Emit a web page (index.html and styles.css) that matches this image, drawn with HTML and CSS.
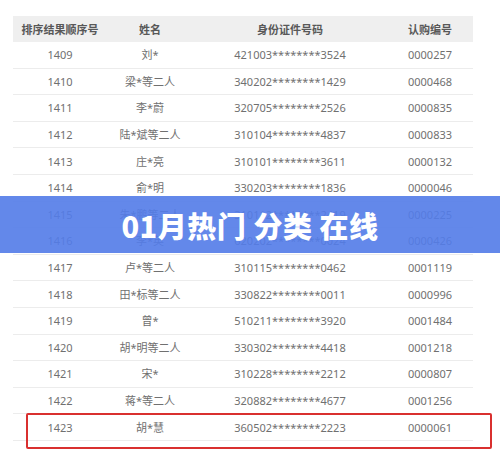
FILE: index.html
```html
<!DOCTYPE html>
<html lang="zh">
<head>
<meta charset="utf-8">
<link rel="stylesheet" href="styles.css">
</head>
<body>
<div class="page">
  <table class="list">
    <colgroup><col class="c1"><col class="c2"><col class="c3"><col class="c4"></colgroup>
    <thead>
      <tr><th>排序结果顺序号</th><th>姓名</th><th>身份证件号码</th><th>认购编号</th></tr>
    </thead>
    <tbody>
      <tr><td>1409</td><td>刘*</td><td>421003********3524</td><td>0000257</td></tr>
      <tr><td>1410</td><td>梁*等二人</td><td>340202********1429</td><td>0000468</td></tr>
      <tr><td>1411</td><td>李*蔚</td><td>320705********2526</td><td>0000835</td></tr>
      <tr><td>1412</td><td>陆*斌等二人</td><td>310104********4837</td><td>0000833</td></tr>
      <tr><td>1413</td><td>庄*亮</td><td>310101********3611</td><td>0000132</td></tr>
      <tr><td>1414</td><td>俞*明</td><td>330203********1836</td><td>0000046</td></tr>
      <tr><td>1415</td><td>朱*鹏等二人</td><td>310112********2419</td><td>0000225</td></tr>
      <tr><td>1416</td><td>李*英</td><td>620202********0024</td><td>0000426</td></tr>
      <tr><td>1417</td><td>卢*等二人</td><td>310115********0462</td><td>0001119</td></tr>
      <tr><td>1418</td><td>田*标等二人</td><td>330822********0011</td><td>0000996</td></tr>
      <tr><td>1419</td><td>曾*</td><td>510211********3920</td><td>0001484</td></tr>
      <tr><td>1420</td><td>胡*明等二人</td><td>330302********4418</td><td>0001218</td></tr>
      <tr><td>1421</td><td>宋*</td><td>310228********2212</td><td>0000807</td></tr>
      <tr><td>1422</td><td>蒋*等二人</td><td>320882********4677</td><td>0001256</td></tr>
      <tr><td>1423</td><td>胡*慧</td><td>360502********2223</td><td>0000061</td></tr>
    </tbody>
  </table>
  <div class="mark"></div>
  <div class="banner">01月热门 分类 在线</div>
</div>
</body>
</html>
```
FILE: styles.css
```css
html, body {
  margin: 0;
  padding: 0;
  background: #ffffff;
}
.page {
  position: relative;
  width: 500px;
  height: 450px;
  overflow: hidden;
  padding: 16px 0 0 13px;
  box-sizing: border-box;
  font-family: "Noto Sans", "Noto Sans CJK SC", sans-serif;
}
.list {
  width: 460px;
  border-collapse: collapse;
  table-layout: fixed;
  font-size: 11px;
  color: #707070;
}
.c1 { width: 94px; }
.c2 { width: 86px; }
.c3 { width: 194px; }
.c4 { width: 86px; }
.list th {
  height: 26px;
  padding: 0;
  background: #efefef;
  color: #585858;
  font-weight: 700;
  font-size: 11px;
  text-align: center;
}
.list td {
  height: 25.6px;
  padding: 0;
  text-align: center;
  border-bottom: 1px solid #ececec;
  line-height: 1;
}
.mark {
  position: absolute;
  left: 26px;
  top: 413px;
  width: 466px;
  height: 36px;
  box-sizing: border-box;
  border: 2px solid #d9302f;
  border-radius: 2px;
}
.banner {
  position: absolute;
  left: 0;
  top: 196px;
  width: 500px;
  height: 57px;
  background: rgba(84, 124, 232, 0.91);
  color: #ffffff;
  font-size: 29px;
  font-weight: 900;
  display: flex;
  align-items: center;
  justify-content: center;
  font-family: "Noto Sans CJK SC", "Noto Sans", sans-serif;
  letter-spacing: 0.5px;
}
```
